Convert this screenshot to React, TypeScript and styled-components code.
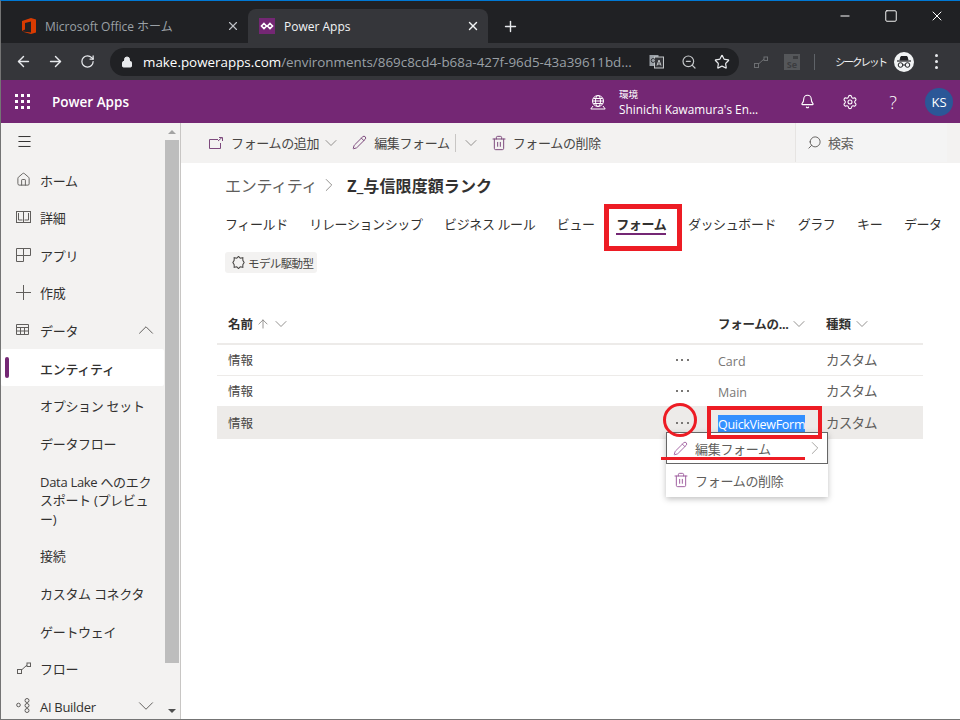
import React from 'react';
import styled, { createGlobalStyle } from 'styled-components';
import {
  ArrowLeft, ArrowRight, RotateCw, Lock, ZoomOut, Star, Plus, X, Minus, Square, Bell, Settings,
  ChevronDown, ChevronUp, ChevronRight, Home, Pencil, Trash2, Search, ArrowUp, Menu,
} from 'lucide-react';

const sans = `"Open Sans", "Noto Sans CJK JP", sans-serif`;

const Global = createGlobalStyle`
  html, body { margin: 0; padding: 0; background: #fff; }
  body { font-family: ${sans}; }
  * { box-sizing: border-box; }
`;

const Page = styled.div`
  position: relative;
  width: 960px;
  height: 720px;
  overflow: hidden;
  display: flex;
  flex-direction: column;
  border-left: 1px solid #747474;
  border-top: 1px solid #0078d4;
  border-bottom: 1px solid #747474;
`;

/* browser chrome */
const TabStrip = styled.div`
  height: 42px;
  flex: none;
  background: #202124;
  display: flex;
  align-items: flex-end;
  color: #fff;
`;
const Tab = styled.div<{ $active?: boolean }>`
  width: ${p => (p.$active ? 240 : 247)}px;
  height: 34px;
  display: flex;
  align-items: center;
  padding: 0 8px 0 ${p => (p.$active ? 11 : 21)}px;
  border-radius: 8px 8px 0 0;
  background: ${p => (p.$active ? '#35363a' : 'transparent')};
  color: ${p => (p.$active ? '#f1f3f4' : '#9aa0a6')};
  font-size: 12px;
`;
const TabTitle = styled.span<{ $gap: number }>`
  flex: 1;
  margin-left: ${p => p.$gap}px;
`;
const NewTab = styled.div`
  width: 44px;
  height: 34px;
  display: flex;
  align-items: center;
  justify-content: center;
`;
const WindowButtons = styled.div`
  margin-left: auto;
  align-self: flex-start;
  display: flex;
  color: #fff;
`;
const WindowButton = styled.div`
  width: 46px;
  height: 29px;
  display: flex;
  align-items: center;
  justify-content: center;
`;
const Toolbar = styled.div`
  height: 37px;
  flex: none;
  background: #35363a;
  display: flex;
  align-items: center;
  color: #e8eaed;
  padding-left: 6px;
`;
const NavButton = styled.div`
  width: 32px;
  height: 28px;
  display: flex;
  align-items: center;
  justify-content: center;
`;
const Omnibox = styled.div`
  width: 629px;
  height: 28px;
  margin-left: 7px;
  border-radius: 14px;
  background: #202124;
  display: flex;
  align-items: center;
  padding-left: 11px;
  font-size: 13.4px;
  color: #9aa0a6;
`;
const Host = styled.span`
  color: #fff;
`;
const Url = styled.div`
  margin-left: 10px;
  width: 488px;
  white-space: nowrap;
`;
const OmniIcons = styled.div`
  display: flex;
  align-items: center;
  gap: 17px;
  margin-left: 18px;
`;
const ExtIcons = styled.div`
  display: flex;
  align-items: center;
  margin-left: 14px;
`;
const SeBadge = styled.div`
  position: relative;
  width: 16px;
  height: 16px;
  margin-left: 15px;
  background: #55575a;
  color: #3c3d40;
  font-size: 9px;
  font-weight: 700;
  line-height: 10px;
  display: flex;
  align-items: flex-end;
  justify-content: center;
  &::after {
    content: '';
    position: absolute;
    right: 2px;
    top: 2px;
    width: 5px;
    height: 3px;
    background: #3c3d40;
  }
`;
const ToolDivider = styled.div`
  width: 1px;
  height: 16px;
  background: #5f6368;
  margin: 0 20px 0 14px;
`;
const Incognito = styled.div`
  font-size: 10.5px;
  letter-spacing: -2px;
  color: #f1f3f4;
  width: 59px;
  white-space: nowrap;
`;
const IncognitoBadge = styled.div`
  width: 20px;
  height: 20px;
  border-radius: 50%;
  background: #f1f3f4;
  display: flex;
  align-items: center;
  justify-content: center;
`;
const Kebab = styled.div`
  margin-left: 21px;
  display: flex;
  flex-direction: column;
  gap: 3px;
`;
const KebabDot = styled.i`
  width: 3px;
  height: 3px;
  border-radius: 50%;
  background: #e8eaed;
`;

/* app header */
const AppBar = styled.div`
  height: 43px;
  flex: none;
  background: #742774;
  display: flex;
  align-items: center;
  color: #fff;
`;
const Waffle = styled.div`
  display: grid;
  grid-template-columns: repeat(3, 3px);
  gap: 3px;
  margin: 0 22px 0 14px;
`;
const WaffleDot = styled.i`
  width: 3px;
  height: 3px;
  background: #fff;
`;
const Brand = styled.div`
  font-size: 13.5px;
  font-weight: 600;
  width: 538px;
`;
const EnvText = styled.div`
  margin-left: 13px;
  width: 166px;
  line-height: 15px;
`;
const EnvLabel = styled.div`
  font-size: 9.5px;
`;
const EnvName = styled.div`
  font-size: 11.8px;
  white-space: nowrap;
`;
const HeaderIcons = styled.div`
  display: flex;
  align-items: center;
  margin-left: 15px;
  gap: 27px;
`;
const Help = styled.div`
  font-size: 18px;
  font-weight: 300;
  width: 16px;
  text-align: center;
`;
const Avatar = styled.div`
  width: 28px;
  height: 28px;
  border-radius: 50%;
  background: #2b5797;
  font-size: 13px;
  display: flex;
  align-items: center;
  justify-content: center;
  margin-left: -3px;
`;

/* body */
const Body = styled.div`
  flex: 1;
  min-height: 0;
  display: flex;
`;
const Sidebar = styled.div`
  width: 180px;
  flex: none;
  background: #f3f2f1;
  border-right: 1px solid #c8c6c4;
  display: flex;
`;
const NavList = styled.div`
  width: 164px;
  flex: none;
  overflow: hidden;
`;
const NavRow = styled.div<{ $active?: boolean; $tall?: boolean }>`
  position: relative;
  height: ${p => (p.$tall ? 75 : 37.6)}px;
  display: flex;
  align-items: center;
  padding-left: 15px;
  margin-right: 1px;
  border-radius: 2px;
  font-size: 13px;
  letter-spacing: -0.3px;
  line-height: 18.5px;
  color: #323130;
  background: ${p => (p.$active ? '#fff' : 'transparent')};
  font-weight: ${p => (p.$active ? 500 : 400)};
`;
const ActiveMark = styled.i`
  position: absolute;
  left: 4px;
  top: 8px;
  width: 4px;
  height: 21px;
  border-radius: 2px;
  background: #742774;
`;
const NavIcon = styled.div`
  width: 24px;
  height: 16px;
  flex: none;
  display: flex;
  align-items: center;
  color: #605e5c;
`;
const NavLabel = styled.div`
  flex: 1;
  min-width: 0;
  padding: 3px 4px 0 0;
`;
const NavChevron = styled.div`
  width: 31px;
  flex: none;
  margin-left: -4px;
  color: #605e5c;
  display: flex;
`;
const Scrollbar = styled.div`
  width: 14px;
  flex: none;
  display: flex;
  flex-direction: column;
  align-items: center;
`;
const ScrollArrow = styled.div<{ $down?: boolean }>`
  height: 17px;
  flex: none;
  display: flex;
  align-items: center;
  justify-content: center;
  &::before {
    content: '';
    border-left: 4px solid transparent;
    border-right: 4px solid transparent;
    ${p => (p.$down ? 'border-top: 4px solid #505050;' : 'border-bottom: 4px solid #a3a3a3;')}
  }
`;
const ScrollThumb = styled.div`
  width: 100%;
  height: 523px;
  background: #bdbdbd;
`;
const ScrollFill = styled.div`
  flex: 1;
`;

const Main = styled.div`
  flex: 1;
  min-width: 0;
  display: flex;
  flex-direction: column;
`;
const CommandBar = styled.div`
  height: 40px;
  flex: none;
  background: #f3f2f1;
  display: flex;
  align-items: center;
  padding: 0 0 1px 28px;
  font-size: 13px;
  letter-spacing: -0.35px;
  color: #484644;
`;
const Command = styled.div<{ $gap: number }>`
  display: flex;
  align-items: center;
  gap: ${p => p.$gap}px;
  color: #484644;
`;
const CommandIcon = styled.span`
  display: flex;
  color: #7d4a7d;
`;
const ChevronSlot = styled.span<{ $left: number; $right: number }>`
  display: flex;
  margin: 0 ${p => p.$right}px 0 ${p => p.$left}px;
  color: #8a8886;
`;
const CommandDivider = styled.i`
  width: 1px;
  height: 18px;
  background: #c8c6c4;
  margin-left: 5px;
`;
const SearchBox = styled.div`
  margin-left: auto;
  width: 152px;
  height: 100%;
  margin-right: 13px;
  border-left: 1px solid #e6e4e2;
  background: #f4f4f4;
  display: flex;
  align-items: center;
  gap: 6px;
  padding-left: 11px;
  color: #605e5c;
`;
const Content = styled.div`
  flex: 1;
  padding: 0 37px 0 36px;
`;
const Breadcrumb = styled.div`
  height: 46px;
  padding: 0 0 2px 8px;
  display: flex;
  align-items: center;
  font-size: 16px;
  color: #605e5c;
`;
const Crumb = styled.span`
  letter-spacing: -0.3px;
`;
const CrumbSep = styled.span`
  display: flex;
  margin: 0 7px 0 1px;
  color: #8a8886;
`;
const CrumbCurrent = styled.span`
  color: #323130;
  font-weight: 700;
  font-size: 16px;
  letter-spacing: 0.1px;
`;
const Tabs = styled.div`
  display: flex;
  padding-left: 8px;
  gap: 21.6px;
  height: 44px;
  margin-top: -1px;
  font-size: 13px;
  letter-spacing: -0.4px;
  color: #323130;
  white-space: nowrap;
`;
const TabLink = styled.div<{ $active?: boolean }>`
  height: 27px;
  padding-top: 6px;
  font-weight: ${p => (p.$active ? 700 : 400)};
  border-bottom: 2px solid ${p => (p.$active ? '#742774' : 'transparent')};
`;
const Chip = styled.div`
  margin-left: 8px;
  width: 92px;
  height: 21px;
  border-radius: 3px;
  background: #f3f2f1;
  display: flex;
  align-items: center;
  gap: 3px;
  padding-left: 7px;
  font-size: 11.5px;
  letter-spacing: -0.6px;
  color: #484644;
`;
const HeaderRow = styled.div`
  margin-top: 33px;
  height: 39px;
  display: flex;
  align-items: center;
  padding-bottom: 2px;
  border-bottom: 2px solid #edebe9;
  font-size: 12.5px;
  font-weight: 700;
  color: #323130;
`;
const Row = styled.div<{ $selected?: boolean }>`
  height: ${p => (p.$selected ? 32 : 31)}px;
  display: flex;
  align-items: center;
  padding-bottom: ${p => (p.$selected ? 1 : 2)}px;
  background: ${p => (p.$selected ? '#edebe9' : '#fff')};
  border-bottom: 1px solid #edebe9;
  font-size: 12.5px;
  color: #484644;
`;
const NameCell = styled.div`
  width: 449px;
  padding-left: 11px;
  display: flex;
  align-items: center;
  gap: 1px;
`;
const HeadIcon = styled.span`
  display: flex;
  color: #8a8886;
`;
const HeadArrow = styled(HeadIcon)`
  margin-left: 2px;
`;
const ActionCell = styled.div`
  width: 52px;
  padding-right: 20px;
  display: flex;
  justify-content: center;
  gap: 3.5px;
  margin-top: 1px;
`;
const ActionDot = styled.i`
  width: 2px;
  height: 2px;
  background: #797775;
`;
const TypeCell = styled.div`
  width: 108px;
  color: #797775;
  font-size: 12.5px;
  margin-top: 4px;
  display: flex;
  align-items: center;
  gap: 1px;
`;
const HeadTypeCell = styled(TypeCell)`
  color: #323130;
  margin-top: 0;
  letter-spacing: -0.3px;
`;
const KindCell = styled.div`
  font-size: 13.5px;
  letter-spacing: -0.8px;
  color: #605e5c;
`;
const HeadKindCell = styled(KindCell)`
  font-size: 12.5px;
  letter-spacing: 0;
  color: #323130;
  display: flex;
  align-items: center;
  gap: 1px;
`;
const Selected = styled.span`
  background: #3390ff;
  color: #fff;
  padding: 1px 0;
  letter-spacing: -0.3px;
`;

/* overlays */
const ContextMenu = styled.div`
  position: absolute;
  left: 665px;
  top: 431px;
  width: 162px;
  height: 65px;
  background: #fff;
  box-shadow: 0 2px 6px rgba(0, 0, 0, 0.25);
  font-size: 13px;
  letter-spacing: -0.3px;
  color: #605e5c;
`;
const MenuItem = styled.div<{ $focused?: boolean }>`
  height: ${p => (p.$focused ? 32 : 30)}px;
  margin-top: ${p => (p.$focused ? 0 : 1)}px;
  display: flex;
  align-items: center;
  gap: ${p => (p.$focused ? 7 : 6)}px;
  border: ${p => (p.$focused ? '1px solid #666' : 'none')};
  padding-left: ${p => (p.$focused ? 6 : 7)}px;
`;
const MenuIcon = styled.span`
  display: flex;
  color: #a060a0;
`;
const MenuArrow = styled.span`
  margin-left: auto;
  margin-right: 1px;
  display: flex;
  color: #a19f9d;
`;
const RedBox = styled.div<{ $l: number; $t: number; $w: number; $h: number; $b: number }>`
  position: absolute;
  left: ${p => p.$l}px;
  top: ${p => p.$t}px;
  width: ${p => p.$w}px;
  height: ${p => p.$h}px;
  border: ${p => p.$b}px solid #ed1c24;
`;
const RedCircle = styled(RedBox)`
  border-radius: 50%;
`;
const RedLine = styled.div`
  position: absolute;
  left: 660px;
  top: 456px;
  width: 144px;
  height: 3px;
  background: #ed1c24;
`;

const OfficeLogo = () => (
  <svg width="14" height="16" viewBox="0 0 14 16">
    <path d="M0 3 9 0l5 1.5v13L9 16l-9-2.6L9 14.5V3.5L3 5v6.5L0 13z" fill="#d83b01" />
  </svg>
);
const PowerAppsFav = () => (
  <svg width="16" height="16" viewBox="0 0 16 16">
    <rect width="16" height="16" fill="#742774" />
    <path d="M5 5.5 7.5 8 5 10.5 2.5 8zM11 5.5 13.5 8 11 10.5 8.5 8z" fill="none" stroke="#fff" strokeWidth="1.6" />
  </svg>
);
const TranslateIcon = () => (
  <svg width="15" height="15" viewBox="0 0 15 15">
    <rect x="0.5" y="1" width="9" height="11" fill="#9aa0a6" />
    <rect x="5.5" y="3" width="9" height="11" fill="#35363a" stroke="#c4c7c9" />
    <path d="M8 11.5 10 6l2 5.5M8.7 10h2.6" stroke="#c4c7c9" fill="none" />
    <circle cx="4.2" cy="6.5" r="2" fill="none" stroke="#35363a" />
  </svg>
);
const FlowIcon = ({ color, size = 16 }: { color: string; size?: number }) => (
  <svg width={size} height={size} viewBox="0 0 16 16" fill="none" stroke={color}>
    <rect x="1.5" y="9.5" width="4" height="4" />
    <rect x="11" y="3" width="3.5" height="3.5" />
    <path d="M5.5 10 11 5" />
  </svg>
);
const BookIcon = () => (
  <svg width="15" height="14" viewBox="0 0 15 14" fill="none" stroke="currentColor">
    <rect x="0.5" y="1.5" width="14" height="11" />
    <path d="M7.5 2v10M2.5 3v7h4M12.5 3v7h-4" />
  </svg>
);
const AppsIcon = () => (
  <svg width="15" height="15" viewBox="0 0 15 15" fill="none" stroke="currentColor">
    <path d="M.5 1.5h14v7h-7v6h-7zM.5 8.5h7M7.5 1.5v7" />
  </svg>
);
const PlusThin = () => (
  <svg width="15" height="15" viewBox="0 0 15 15" fill="none" stroke="currentColor">
    <path d="M7.5 0v15M0 7.5h15" />
  </svg>
);
const TableIcon = () => (
  <svg width="13" height="11" viewBox="0 0 13 11" fill="none" stroke="currentColor">
    <path d="M.5.5h12v10H.5zM.5 3.5h12M.5 7h12M4.5 3.5v7M8.5 3.5v7" />
  </svg>
);
const AiIcon = () => (
  <svg width="15" height="15" viewBox="0 0 15 15" fill="none" stroke="currentColor">
    <circle cx="2.5" cy="7" r="1.8" />
    <circle cx="11" cy="2.5" r="2" />
    <circle cx="11" cy="7.5" r="2" />
    <circle cx="11" cy="12.5" r="2" />
  </svg>
);
const AddFormIcon = () => (
  <svg width="14" height="12" viewBox="0 0 14 12" fill="none" stroke="#7d4a7d">
    <path d="M9 2.5H.5v9h11V6M9 4l4-3.5M10 .5h3.5V4" />
  </svg>
);
const PuzzleIcon = () => (
  <svg width="13" height="13" viewBox="0 0 14 15" fill="none" stroke="#484644" strokeWidth="1.2">
    <path d="M7 .5 9 2.5 12 2v3l1.500 2.500L12 10v3l-3-.5-2 2-2-2-3 .5v-3L.5 7.500 2 5V2l3 .5z" />
  </svg>
);
const GlobeIcon = () => (
  <svg width="16" height="16" viewBox="0 0 16 16" fill="none" stroke="#fff">
    <circle cx="8" cy="7" r="5.5" />
    <ellipse cx="8" cy="7" rx="2.5" ry="5.5" />
    <path d="M2.5 7h11M3.3 4.5h9.4M3.3 9.5h9.4M3 12 .8 15h14.4L13 12" />
  </svg>
);
const SpyIcon = () => (
  <svg width="16" height="14" viewBox="0 0 16 14" fill="none" stroke="#202124">
    <path d="M4 5 5 1.5h6L12 5z" fill="#202124" />
    <path d="M1 6h14" strokeWidth="1.2" />
    <circle cx="4.5" cy="10" r="2.3" />
    <circle cx="11.5" cy="10" r="2.3" />
    <path d="M6.8 10h2.400" />
  </svg>
);

const Dots = () => (
  <ActionCell><ActionDot /><ActionDot /><ActionDot /></ActionCell>
);

function App() {
  return (
    <Page>
      <Global />
      <TabStrip>
        <Tab>
          <OfficeLogo />
          <TabTitle $gap={9}>Microsoft Office ホーム</TabTitle>
          <X size={14} color="#bdc1c6" />
        </Tab>
        <Tab $active>
          <PowerAppsFav />
          <TabTitle $gap={9}>Power Apps</TabTitle>
          <X size={14} color="#f1f3f4" strokeWidth={2.4} />
        </Tab>
        <NewTab>
          <Plus size={17} color="#e8eaed" strokeWidth={2} />
        </NewTab>
        <WindowButtons>
          <WindowButton><Minus size={14} strokeWidth={1.7} /></WindowButton>
          <WindowButton><Square size={14} strokeWidth={1.6} /></WindowButton>
          <WindowButton><X size={16} strokeWidth={1.5} /></WindowButton>
        </WindowButtons>
      </TabStrip>
      <Toolbar>
        <NavButton><ArrowLeft size={17} strokeWidth={2} /></NavButton>
        <NavButton><ArrowRight size={17} strokeWidth={2} /></NavButton>
        <NavButton><RotateCw size={15} strokeWidth={2} /></NavButton>
        <Omnibox>
          <Lock size={12} fill="#e8eaed" color="#e8eaed" />
          <Url><Host>make.powerapps.com</Host>/environments/869c8cd4-b68a-427f-96d5-43a39611bd...</Url>
          <OmniIcons>
            <TranslateIcon />
            <ZoomOut size={16} color="#c4c7c9" strokeWidth={1.8} />
            <Star size={16} color="#e8eaed" strokeWidth={1.8} />
          </OmniIcons>
        </Omnibox>
        <ExtIcons>
          <FlowIcon color="#6d6f72" />
          <SeBadge>Se</SeBadge>
          <ToolDivider />
          <Incognito>シークレット</Incognito>
          <IncognitoBadge><SpyIcon /></IncognitoBadge>
          <Kebab><KebabDot /><KebabDot /><KebabDot /></Kebab>
        </ExtIcons>
      </Toolbar>
      <AppBar>
        <Waffle>
          {Array.from({ length: 9 }).map((_, i) => <WaffleDot key={i} />)}
        </Waffle>
        <Brand>Power Apps</Brand>
        <GlobeIcon />
        <EnvText>
          <EnvLabel>環境</EnvLabel>
          <EnvName>Shinichi Kawamura's En...</EnvName>
        </EnvText>
        <HeaderIcons>
          <Bell size={15} strokeWidth={1.8} />
          <Settings size={16} strokeWidth={1.6} />
          <Help>?</Help>
          <Avatar>KS</Avatar>
        </HeaderIcons>
      </AppBar>
      <Body>
        <Sidebar>
          <NavList>
            <NavRow><Menu size={17} strokeWidth={1.4} color="#323130" /></NavRow>
            <NavRow><NavIcon><Home size={15} strokeWidth={1.5} /></NavIcon><NavLabel>ホーム</NavLabel></NavRow>
            <NavRow><NavIcon><BookIcon /></NavIcon><NavLabel>詳細</NavLabel></NavRow>
            <NavRow><NavIcon><AppsIcon /></NavIcon><NavLabel>アプリ</NavLabel></NavRow>
            <NavRow><NavIcon><PlusThin /></NavIcon><NavLabel>作成</NavLabel></NavRow>
            <NavRow>
              <NavIcon><TableIcon /></NavIcon><NavLabel>データ</NavLabel>
              <NavChevron><ChevronUp size={26} strokeWidth={0.9} /></NavChevron>
            </NavRow>
            <NavRow $active><ActiveMark /><NavIcon /><NavLabel>エンティティ</NavLabel></NavRow>
            <NavRow><NavIcon /><NavLabel>オプション セット</NavLabel></NavRow>
            <NavRow><NavIcon /><NavLabel>データフロー</NavLabel></NavRow>
            <NavRow $tall><NavIcon /><NavLabel>Data Lake へのエクスポート (プレビュー)</NavLabel></NavRow>
            <NavRow><NavIcon /><NavLabel>接続</NavLabel></NavRow>
            <NavRow><NavIcon /><NavLabel>カスタム コネクタ</NavLabel></NavRow>
            <NavRow><NavIcon /><NavLabel>ゲートウェイ</NavLabel></NavRow>
            <NavRow><NavIcon><FlowIcon color="#605e5c" /></NavIcon><NavLabel>フロー</NavLabel></NavRow>
            <NavRow>
              <NavIcon><AiIcon /></NavIcon><NavLabel>AI Builder</NavLabel>
              <NavChevron><ChevronDown size={26} strokeWidth={0.9} /></NavChevron>
            </NavRow>
          </NavList>
          <Scrollbar>
            <ScrollArrow />
            <ScrollThumb />
            <ScrollFill />
            <ScrollArrow $down />
          </Scrollbar>
        </Sidebar>
        <Main>
          <CommandBar>
            <Command $gap={8}>
              <CommandIcon><AddFormIcon /></CommandIcon>
              フォームの追加
            </Command>
            <ChevronSlot $left={2} $right={11}><ChevronDown size={20} strokeWidth={1.1} /></ChevronSlot>
            <Command $gap={7}>
              <CommandIcon><Pencil size={15} strokeWidth={1.6} /></CommandIcon>
              編集フォーム
            </Command>
            <CommandDivider />
            <ChevronSlot $left={5} $right={10}><ChevronDown size={20} strokeWidth={1.1} /></ChevronSlot>
            <Command $gap={6}>
              <CommandIcon><Trash2 size={16} strokeWidth={1.5} /></CommandIcon>
              フォームの削除
            </Command>
            <SearchBox><Search size={15} strokeWidth={1.5} style={{ transform: 'scaleX(-1)' }} />検索</SearchBox>
          </CommandBar>
          <Content>
            <Breadcrumb>
              <Crumb>エンティティ</Crumb>
              <CrumbSep><ChevronRight size={22} strokeWidth={1} /></CrumbSep>
              <CrumbCurrent>Z_与信限度額ランク</CrumbCurrent>
            </Breadcrumb>
            <Tabs>
              <TabLink>フィールド</TabLink>
              <TabLink>リレーションシップ</TabLink>
              <TabLink>ビジネス ルール</TabLink>
              <TabLink>ビュー</TabLink>
              <TabLink $active>フォーム</TabLink>
              <TabLink>ダッシュボード</TabLink>
              <TabLink>グラフ</TabLink>
              <TabLink>キー</TabLink>
              <TabLink>データ</TabLink>
            </Tabs>
            <Chip><PuzzleIcon />モデル駆動型</Chip>
            <HeaderRow>
              <NameCell>
                名前
                <HeadArrow><ArrowUp size={14} strokeWidth={1.5} /></HeadArrow>
                <HeadIcon><ChevronDown size={20} strokeWidth={1.1} /></HeadIcon>
              </NameCell>
              <ActionCell />
              <HeadTypeCell>
                フォームの...
                <HeadIcon><ChevronDown size={20} strokeWidth={1.1} /></HeadIcon>
              </HeadTypeCell>
              <HeadKindCell>
                種類
                <HeadIcon><ChevronDown size={20} strokeWidth={1.1} /></HeadIcon>
              </HeadKindCell>
            </HeaderRow>
            <Row>
              <NameCell>情報</NameCell>
              <Dots />
              <TypeCell>Card</TypeCell>
              <KindCell>カスタム</KindCell>
            </Row>
            <Row>
              <NameCell>情報</NameCell>
              <Dots />
              <TypeCell>Main</TypeCell>
              <KindCell>カスタム</KindCell>
            </Row>
            <Row $selected>
              <NameCell>情報</NameCell>
              <Dots />
              <TypeCell><Selected>QuickViewForm</Selected></TypeCell>
              <KindCell>カスタム</KindCell>
            </Row>
          </Content>
        </Main>
      </Body>

      <ContextMenu>
        <MenuItem $focused>
          <MenuIcon><Pencil size={15} strokeWidth={1.5} /></MenuIcon>
          編集フォーム
          <MenuArrow><ChevronRight size={22} strokeWidth={1} /></MenuArrow>
        </MenuItem>
        <MenuItem>
          <MenuIcon><Trash2 size={16} strokeWidth={1.5} /></MenuIcon>
          フォームの削除
        </MenuItem>
      </ContextMenu>

      <RedBox $l={603} $t={203} $w={78} $h={47} $b={5} />
      <RedBox $l={706} $t={405} $w={115} $h={33} $b={4} />
      <RedCircle $l={662} $t={402} $w={34} $h={34} $b={3} />
      <RedLine />
    </Page>
  );
}

export default App;
